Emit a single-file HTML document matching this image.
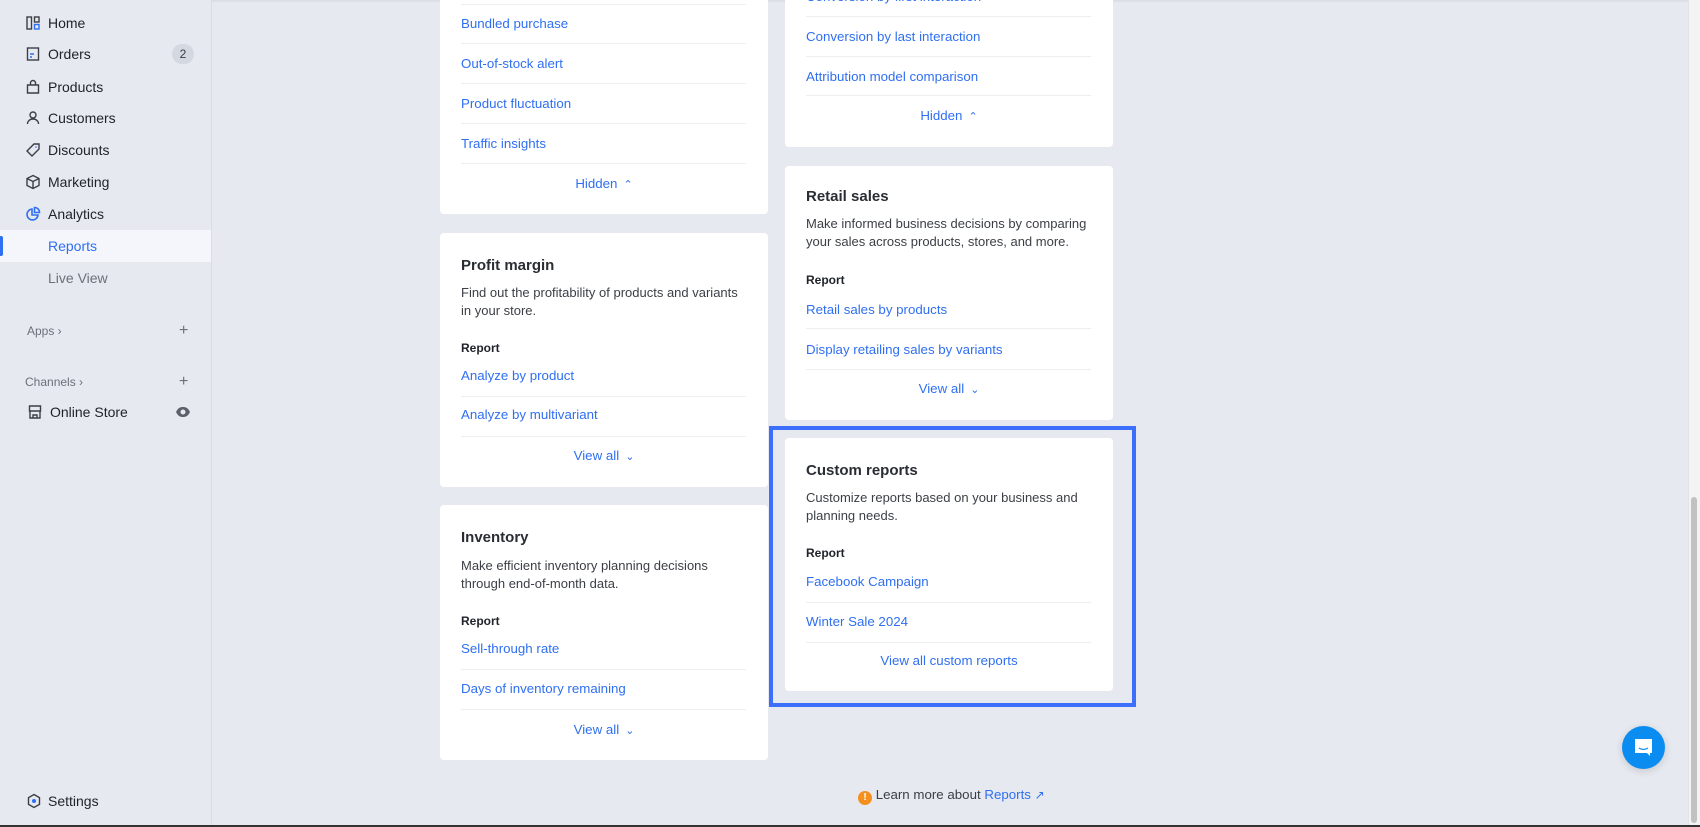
<!DOCTYPE html>
<html><head><meta charset="utf-8"><style>
*{margin:0;padding:0;box-sizing:border-box}
body{width:1700px;height:827px;overflow:hidden;background:#e6e9ef;font-family:"Liberation Sans",sans-serif;position:relative;color:#1f2329}
.a{position:absolute;white-space:nowrap;line-height:20px}
.sb{position:absolute;left:0;top:0;width:212px;height:827px;background:#e6e9ef;border-right:1px solid #d9dde4}
.nav{font-size:14px;color:#1f2329;left:48px}
.ic{position:absolute;left:25px;width:16px;height:16px}
.card{position:absolute;background:#fff;border-radius:4px;overflow:hidden}
.l{font-size:13.3px;color:#2f6ff2;left:21px}
.t{font-size:15px;font-weight:bold;color:#2a2e34;left:21px}
.d{font-size:13px;color:#3b3f45;left:21px;line-height:18px;white-space:normal}
.r{font-size:12px;font-weight:bold;color:#1f2329;left:21px}
.hr{position:absolute;left:21px;right:22px;height:1px;background:#eceef2}
.c{font-size:13.3px;color:#2f6ff2;left:0;right:0;text-align:center}
.ch{display:inline-block;font-size:11px;margin-left:6px}
</style></head><body>
<div style="position:absolute;left:0;top:0;width:1700px;height:3px;background:linear-gradient(#d8dbe1,#e6e9ef)"></div>
<div class="sb">
<svg class="ic" style="top:15px" viewBox="0 0 16 16" fill="none" stroke="#3b3f45" stroke-width="1.4"><rect x="2" y="2" width="4.5" height="12"/><rect x="9.5" y="2" width="4.5" height="5"/><rect x="9.5" y="9.5" width="4.5" height="4.5" stroke="#2f6ff2"/></svg>
<div class="a nav" style="top:13px">Home</div>
<svg class="ic" style="top:46px" viewBox="0 0 16 16" fill="none" stroke="#3b3f45" stroke-width="1.4"><rect x="2.5" y="2" width="11" height="12"/><path d="M5 8h4M5 11h2" stroke="#2f6ff2"/></svg>
<div class="a nav" style="top:44px">Orders</div>
<div class="a" style="left:172px;top:44px;width:22px;height:20px;border-radius:10px;background:#d3d8e1;text-align:center;font-size:12px;color:#3b3f45">2</div>
<svg class="ic" style="top:79px" viewBox="0 0 16 16" fill="none" stroke="#3b3f45" stroke-width="1.4"><path d="M2.5 6h11v8h-11z M5.5 6V4a2.5 2.5 0 0 1 5 0v2"/></svg>
<div class="a nav" style="top:77px">Products</div>
<svg class="ic" style="top:110px" viewBox="0 0 16 16" fill="none" stroke="#3b3f45" stroke-width="1.4"><circle cx="8" cy="5" r="3"/><path d="M2.5 14c0-3 2.5-5 5.5-5s5.5 2 5.5 5"/></svg>
<div class="a nav" style="top:108px">Customers</div>
<svg class="ic" style="top:142px" viewBox="0 0 16 16" fill="none" stroke="#3b3f45" stroke-width="1.4"><path d="M9 2h5v5l-7 7-5-5z"/><circle cx="11" cy="5" r=".8" fill="#2f6ff2" stroke="none"/></svg>
<div class="a nav" style="top:140px">Discounts</div>
<svg class="ic" style="top:174px" viewBox="0 0 16 16" fill="none" stroke="#3b3f45" stroke-width="1.4"><path d="M8 1.5l6 3v7l-6 3-6-3v-7z M2 4.5l6 3 6-3 M8 7.5v7"/></svg>
<div class="a nav" style="top:172px">Marketing</div>
<svg class="ic" style="top:206px" viewBox="0 0 16 16" fill="none" stroke="#2f6ff2" stroke-width="1.6"><path d="M7 3a5.5 5.5 0 1 0 6 6H7z"/><path d="M9.5 1.5v5h5a5 5 0 0 0-5-5z"/></svg>
<div class="a nav" style="top:204px">Analytics</div>
<div style="position:absolute;left:0;top:230px;width:211px;height:32px;background:#f4f6fb"></div>
<div style="position:absolute;left:0;top:236px;width:3px;height:20px;background:#2f6ff2;border-radius:0 2px 2px 0"></div>
<div class="a nav" style="top:236px;color:#2f6ff2">Reports</div>
<div class="a nav" style="top:268px;color:#6b7079">Live View</div>
<div class="a" style="left:27px;top:321px;font-size:12px;color:#6b7079">Apps &#8250;</div>
<div class="a" style="left:179px;top:321px;font-size:16px;color:#6b7079">+</div>
<div class="a" style="left:25px;top:372px;font-size:12px;color:#6b7079">Channels &#8250;</div>
<div class="a" style="left:179px;top:372px;font-size:16px;color:#6b7079">+</div>
<svg class="ic" style="top:404px;left:27px" viewBox="0 0 16 16" fill="none" stroke="#3b3f45" stroke-width="1.4"><path d="M2.5 2h11v5h-11z M3 7v7h10V7 M6 14v-3h4v3"/></svg>
<div class="a nav" style="top:402px;left:50px">Online Store</div>
<svg style="position:absolute;left:175px;top:405px" width="16" height="14" viewBox="0 0 16 14"><path d="M1 7c2-4 4-5 7-5s5 1 7 5c-2 4-4 5-7 5S3 11 1 7z" fill="#5c6068"/><circle cx="8" cy="7" r="2.5" fill="#e6e9ef"/></svg>
<svg class="ic" style="top:793px;left:26px" viewBox="0 0 16 16" fill="none" stroke="#3b3f45" stroke-width="1.4"><path d="M8 1.5l5.5 3.2v6.6L8 14.5l-5.5-3.2V4.7z"/><circle cx="8" cy="8" r="2" fill="#2f6ff2" stroke="none"/></svg>
<div class="a nav" style="top:791px">Settings</div>
</div>

<div class="card" style="left:440px;top:-10px;width:328px;height:224px">
<div class="hr" style="top:14px"></div>
<div class="a l" style="top:24px">Bundled purchase</div>
<div class="hr" style="top:53px"></div>
<div class="a l" style="top:64px">Out-of-stock alert</div>
<div class="hr" style="top:93px"></div>
<div class="a l" style="top:104px">Product fluctuation</div>
<div class="hr" style="top:133px"></div>
<div class="a l" style="top:144px">Traffic insights</div>
<div class="hr" style="top:173px"></div>
<div class="a c" style="top:184px">Hidden<span class="ch">&#8963;</span></div>
</div>

<div class="card" style="left:440px;top:233px;width:328px;height:254px">
<div class="a t" style="top:23px">Profit margin</div>
<div class="a d" style="top:51px;width:290px">Find out the profitability of products and variants in your store.</div>
<div class="a r" style="top:105px">Report</div>
<div class="a l" style="top:133px">Analyze by product</div>
<div class="hr" style="top:163px"></div>
<div class="a l" style="top:172px">Analyze by multivariant</div>
<div class="hr" style="top:203px"></div>
<div class="a c" style="top:213px">View all<span class="ch">&#8964;</span></div>
</div>

<div class="card" style="left:440px;top:505px;width:328px;height:255px">
<div class="a t" style="top:23px">Inventory</div>
<div class="a d" style="top:52px;width:290px">Make efficient inventory planning decisions through end-of-month data.</div>
<div class="a r" style="top:106px">Report</div>
<div class="a l" style="top:134px">Sell-through rate</div>
<div class="hr" style="top:164px"></div>
<div class="a l" style="top:174px">Days of inventory remaining</div>
<div class="hr" style="top:204px"></div>
<div class="a c" style="top:215px">View all<span class="ch">&#8964;</span></div>
</div>

<div class="card" style="left:785px;top:-10px;width:328px;height:157px">
<div class="a l" style="top:-3px">Conversion by first interaction</div>
<div class="hr" style="top:26px"></div>
<div class="a l" style="top:37px">Conversion by last interaction</div>
<div class="hr" style="top:66px"></div>
<div class="a l" style="top:77px">Attribution model comparison</div>
<div class="hr" style="top:105px"></div>
<div class="a c" style="top:116px">Hidden<span class="ch">&#8963;</span></div>
</div>

<div class="card" style="left:785px;top:166px;width:328px;height:254px">
<div class="a t" style="top:21px">Retail sales</div>
<div class="a d" style="top:49px;width:290px">Make informed business decisions by comparing your sales across products, stores, and more.</div>
<div class="a r" style="top:104px">Report</div>
<div class="a l" style="top:134px">Retail sales by products</div>
<div class="hr" style="top:162px"></div>
<div class="a l" style="top:174px">Display retailing sales by variants</div>
<div class="hr" style="top:203px"></div>
<div class="a c" style="top:213px">View all<span class="ch">&#8964;</span></div>
</div>

<div style="position:absolute;left:769px;top:426px;width:367px;height:281px;border:4px solid #3b6ffc"></div>
<div class="card" style="left:785px;top:438px;width:328px;height:253px">
<div class="a t" style="top:23px">Custom reports</div>
<div class="a d" style="top:51px;width:290px">Customize reports based on your business and planning needs.</div>
<div class="a r" style="top:105px">Report</div>
<div class="a l" style="top:134px">Facebook Campaign</div>
<div class="hr" style="top:164px"></div>
<div class="a l" style="top:174px">Winter Sale 2024</div>
<div class="hr" style="top:204px"></div>
<div class="a c" style="top:213px">View all custom reports</div>
</div>

<div class="a" style="left:858px;top:785px;font-size:13.3px;color:#3b3f45"><span style="display:inline-block;width:14px;height:14px;border-radius:7px;background:#f5901e;color:#fff;font-size:10px;line-height:14px;text-align:center;font-weight:bold;vertical-align:-1px">!</span> Learn more about <span style="color:#2f6ff2">Reports</span> <span style="color:#2f6ff2;font-size:12px">&#8599;</span></div>

<div style="position:absolute;left:1622px;top:726px;width:43px;height:43px;border-radius:50%;background:#0b8cf0;box-shadow:0 2px 8px rgba(0,0,0,.15)"></div>
<svg style="position:absolute;left:1633px;top:738px" width="21" height="19" viewBox="0 0 21 19"><path d="M2 1h17v14h-2v3l-3-3H2z" fill="#fff"/><path d="M6 10q4.5 3 9 0" stroke="#0b8cf0" stroke-width="1.3" fill="none"/></svg>

<div style="position:absolute;left:1688px;top:0;width:12px;height:827px;background:#f3f3f3;border-left:1px solid #e2e2e2"></div>
<div style="position:absolute;left:1691px;top:497px;width:6px;height:326px;background:#c1c1c1;border-radius:3px"></div>
<div style="position:absolute;left:0;top:825px;width:1700px;height:2px;background:#333"></div>
</body></html>
